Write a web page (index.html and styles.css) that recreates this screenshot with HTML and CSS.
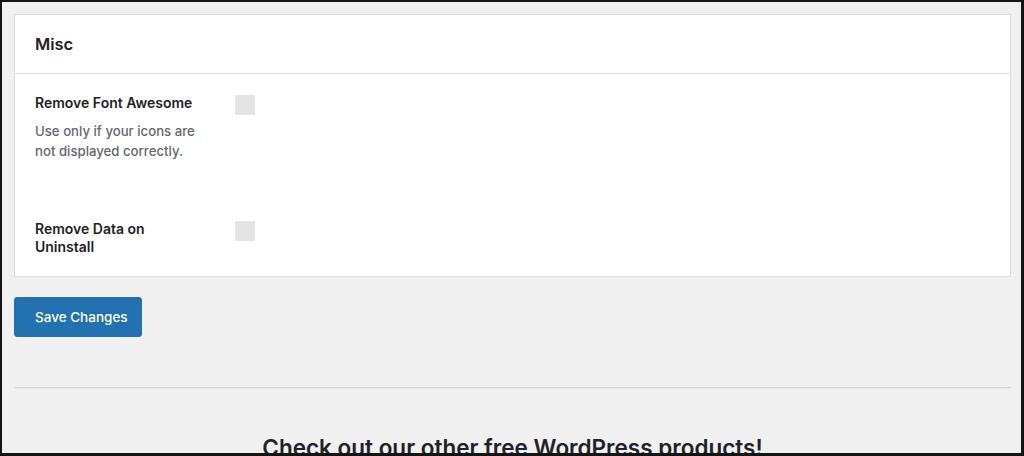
FILE: index.html
```html
<!DOCTYPE html>
<html lang="en">
<head>
<meta charset="utf-8">
<title>Misc settings</title>
<link rel="stylesheet" href="styles.css">
</head>
<body>
<div class="frame">
  <div class="page">
    <section class="card">
      <header class="card-header"><h2>Misc</h2></header>
      <div class="card-body">
        <div class="row row-first">
          <div class="label-col">
            <div class="label">Remove Font Awesome</div>
            <p class="desc">Use only if your icons are not displayed correctly.</p>
          </div>
          <div class="field"><span class="checkbox"></span></div>
        </div>
        <div class="row row-second">
          <div class="label-col">
            <div class="label">Remove Data on Uninstall</div>
          </div>
          <div class="field"><span class="checkbox"></span></div>
        </div>
      </div>
    </section>
    <button class="btn-primary" type="button">Save Changes</button>
    <hr class="divider">
    <h2 class="promo">Check out our other free WordPress products!</h2>
  </div>
</div>
</body>
</html>
```
FILE: styles.css
```css
* { box-sizing: border-box; }
html, body { margin: 0; padding: 0; background: #111; }
body {
  font-family: Inter, "Liberation Sans", Arial, sans-serif;
  color: #1d2327;
}
.frame {
  width: 1024px;
  height: 456px;
  border-style: solid;
  border-color: #141414;
  border-width: 2px 3px 3px 2px;
  background: #f0f0f1;
  overflow: hidden;
}
.page {
  padding: 12px 10px 0 12px;
}
.card {
  background: #fff;
  border: 1px solid #dcdcde;
}
.card-header {
  height: 59px;
  border-bottom: 1px solid #dcdcde;
  display: flex;
  align-items: center;
  padding: 0 20px;
}
.card-header h2 {
  margin: 0;
  font-size: 16.5px;
  font-weight: 600;
}
.card-body {
  padding: 0 20px;
}
.row {
  display: flex;
}
.row-first { height: 126px; padding-top: 20px; }
.row-second { height: 76px; padding-top: 20px; }
.label-col {
  width: 200px;
}
.label {
  font-size: 14px;
  font-weight: 600;
  line-height: 18px;
  width: 160px;
}
.desc {
  margin: 9px 0 0;
  font-size: 13.2px;
  font-weight: 500;
  line-height: 20px;
  color: #646970;
  width: 170px;
}
.field { padding-top: 1px; }
.checkbox {
  display: block;
  width: 20px;
  height: 20px;
  background: #e3e3e3;
  border: 1px solid #e6e6e6;
}
.btn-primary {
  display: block;
  margin-top: 20px;
  height: 40px;
  width: 128px;
  padding: 0 20px;
  white-space: nowrap;
  text-align: left;
  background: #2271b1;
  color: #fff;
  border: 1px solid #2271b1;
  border-radius: 3px;
  font-family: inherit;
  font-size: 13.5px;
  font-weight: 500;
  cursor: pointer;
}
.divider {
  margin: 50px 0 0;
  border: 0;
  border-top: 1px solid #d4d4d6;
  border-bottom: 1px solid #e8e8e9;
}
.promo {
  margin: 44px 0 0;
  text-align: center;
  font-size: 22.5px;
  font-weight: 600;
  line-height: 30px;
  color: #1d2327;
}
```
